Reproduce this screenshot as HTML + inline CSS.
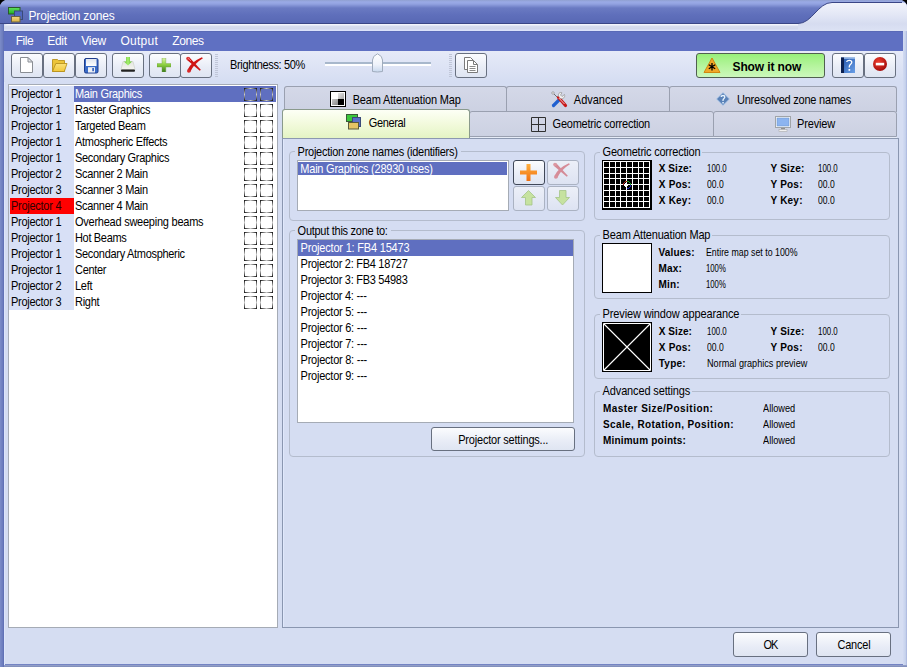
<!DOCTYPE html>
<html><head><meta charset="utf-8">
<style>
*{box-sizing:border-box;margin:0;padding:0}
html,body{width:907px;height:667px;overflow:hidden;background:#7484c4;font-family:"Liberation Sans",sans-serif}
#w{position:absolute;left:0;top:0;width:907px;height:667px;overflow:hidden}
.a{position:absolute}
.t{position:absolute;white-space:pre;line-height:1;font-family:"Liberation Sans",sans-serif}
.btn{position:absolute;border:1px solid #687080;border-radius:3px;background:linear-gradient(#fbfcfe,#e8ecf6 60%,#dfe5f2)}
.grp{position:absolute;border:1px solid #b4bccd;border-radius:4px}
.glab{position:absolute;background:#d5ddf2;height:12px}
.cb{position:absolute;width:13px;height:13px;background:linear-gradient(90deg,#111,#c8c8c8 50%,#111) 0 0/13px 1px no-repeat,linear-gradient(90deg,#111,#c8c8c8 50%,#111) 0 12px/13px 1px no-repeat,linear-gradient(#111,#c8c8c8 50%,#111) 0 0/1px 13px no-repeat,linear-gradient(#111,#c8c8c8 50%,#111) 12px 0/1px 13px no-repeat}
.tab{position:absolute;border:1px solid #9aa0b0;border-bottom:none;border-radius:3px 3px 0 0;background:linear-gradient(#d4d8e8,#ccd1e2)}
</style></head><body><div id="w">
<!-- title bar -->
<div class="a" style="left:0;top:0;width:907px;height:24px;background:linear-gradient(#90a0d0 0,#9aaae6 2px,#92a2e0 4px,#6a7ac2 8px,#5f6fbb 15px,#5868b4 23px)"></div>

<svg class="a" style="left:0;top:0" width="907" height="8">
 <path d="M0 0 H5 Q1.5 1.5 0 5 Z" fill="#000"/>
 <path d="M907 0 H902 Q905.5 1.5 907 5 Z" fill="#000"/>
</svg>
<!-- app icon -->
<svg class="a" style="left:8px;top:7px" width="16" height="16">
 <defs><linearGradient id="ig" x1="0" y1="0" x2="0" y2="1"><stop offset="0" stop-color="#60e060"/><stop offset="1" stop-color="#20b020"/></linearGradient>
 <linearGradient id="iy" x1="0" y1="0" x2="0" y2="1"><stop offset="0" stop-color="#f0d888"/><stop offset="1" stop-color="#d8b040"/></linearGradient></defs>
 <rect x="0.5" y="0.5" width="11.5" height="6.5" fill="url(#ig)" stroke="#2a5a2a"/>
 <rect x="6.5" y="4" width="8" height="8.5" fill="#5068c0" stroke="#3a4a7a"/>
 <rect x="3.5" y="9.5" width="8.5" height="5.5" fill="url(#iy)" stroke="#6a6040"/>
</svg>
<!-- close X -->
<svg class="a" style="left:882px;top:8px" width="16" height="16"><path d="M3 3 L12.5 12.5 M12.5 3 L3 12.5" stroke="#4a5068" stroke-width="1.8"/></svg>
<!-- inner dialog -->
<div class="a" style="left:4px;top:24px;width:899px;height:640px;background:#d5ddf2"></div>
<div class="a" style="left:903px;top:31px;width:4px;height:636px;background:linear-gradient(90deg,#d2daf2,#c6d2ec 60%,#a8b4dc)"></div>
<div class="a" style="left:4px;top:82px;width:1px;height:583px;background:#dde5fb"></div><div class="a" style="left:0;top:665px;width:907px;height:2px;background:linear-gradient(#98a4cc,#7c8ab8)"></div>
<div class="a" style="left:0;top:24px;width:4px;height:643px;background:linear-gradient(90deg,#7c8cc8,#6a7abc 75%,#5a6ab0)"></div>
<div class="a" style="left:4px;top:24px;width:899px;height:7px;background:linear-gradient(#f2f4fc 0,#f2f4fc 1px,#d6dcee 2px,#d2d8ec 5px,#dce2fa 6px);border-radius:4px 0 0 0"></div>
<svg class="a" style="left:0;top:0" width="907" height="31">
 <defs><linearGradient id="tl" x1="0" y1="0" x2="0" y2="1"><stop offset="0" stop-color="#f2f4fc"/><stop offset="0.4" stop-color="#e4e8f6"/><stop offset="0.75" stop-color="#d6dcf0"/><stop offset="1" stop-color="#dce2f4"/></linearGradient></defs>
 <path d="M798 23.5 C812 23.5 818 2.5 832 2.5 L903 2.5 Q907 2.5 907 7 L907 31 L798 31 Z" fill="url(#tl)"/>
 <path d="M0 23.5 L798 23.5 C812 23.5 818 2.5 832 2.5 L902 2.5" fill="none" stroke="#3a4686" stroke-width="1"/>
</svg>
<div class="a" style="left:4px;top:31px;width:899px;height:20px;background:linear-gradient(#5262ac 0,#5f70c2 1px)"></div>
<div class="a" style="left:4px;top:51px;width:899px;height:31px;background:linear-gradient(#e6eaf8,#d5ddf2)"></div>
<!-- toolbar buttons -->
<div class="btn" style="left:11px;top:53px;width:32px;height:25px"></div>
<div class="btn" style="left:43px;top:53px;width:32px;height:25px"></div>
<div class="btn" style="left:75px;top:53px;width:32px;height:25px"></div>
<div class="btn" style="left:112px;top:53px;width:32px;height:25px"></div>
<div class="btn" style="left:149px;top:53px;width:32px;height:25px"></div>
<div class="btn" style="left:180px;top:53px;width:32px;height:25px"></div>
<div class="btn" style="left:455px;top:53px;width:32px;height:25px"></div>
<div class="btn" style="left:696px;top:53px;width:129px;height:25px;background:linear-gradient(#98f07a,#b4f49c 50%,#ccf8bc);border-color:#506050"></div>
<div class="btn" style="left:832px;top:53px;width:32px;height:25px"></div>
<div class="btn" style="left:864px;top:53px;width:32px;height:25px"></div>
<!-- separators -->
<div class="a" style="left:215px;top:54px;width:3px;height:24px;background:repeating-linear-gradient(#c0c6d8 0 1px,transparent 1px 2px)"></div>
<div class="a" style="left:449px;top:54px;width:3px;height:24px;background:repeating-linear-gradient(#c0c6d8 0 1px,transparent 1px 2px)"></div>
<!-- slider -->
<div class="a" style="left:325px;top:62px;width:106px;height:4px;background:#a8b8cc;border-bottom:2px solid #fff"></div>
<svg class="a" style="left:371px;top:53px" width="13" height="20">
 <defs><linearGradient id="th" x1="0" y1="0" x2="0" y2="1"><stop offset="0" stop-color="#fff"/><stop offset="0.6" stop-color="#eef2fa"/><stop offset="1" stop-color="#c8d8ee"/></linearGradient></defs>
 <path d="M1.5 18.5 V7 Q1.5 3 6.5 0.8 Q11.5 3 11.5 7 V18.5 Q6.5 19.5 1.5 18.5 Z" fill="url(#th)" stroke="#a0acbc"/>
</svg>

<!-- left list -->
<div class="a" style="left:8px;top:84px;width:270px;height:544px;background:#fff;border:1px solid #a5abb5"></div>
<div class="a" style="left:9px;top:86px;width:65px;height:224px;background:#d8e0f6"></div>
<div class="a" style="left:74px;top:86px;width:202px;height:16px;background:#5f6fc0"></div>
<div class="a" style="left:10px;top:198px;width:64px;height:16px;background:#ff0000"></div>
<div class="cb" style="left:244px;top:88px"></div>
<div class="cb" style="left:260px;top:88px"></div>
<div class="cb" style="left:244px;top:104px"></div>
<div class="cb" style="left:260px;top:104px"></div>
<div class="cb" style="left:244px;top:120px"></div>
<div class="cb" style="left:260px;top:120px"></div>
<div class="cb" style="left:244px;top:136px"></div>
<div class="cb" style="left:260px;top:136px"></div>
<div class="cb" style="left:244px;top:152px"></div>
<div class="cb" style="left:260px;top:152px"></div>
<div class="cb" style="left:244px;top:168px"></div>
<div class="cb" style="left:260px;top:168px"></div>
<div class="cb" style="left:244px;top:184px"></div>
<div class="cb" style="left:260px;top:184px"></div>
<div class="cb" style="left:244px;top:200px"></div>
<div class="cb" style="left:260px;top:200px"></div>
<div class="cb" style="left:244px;top:216px"></div>
<div class="cb" style="left:260px;top:216px"></div>
<div class="cb" style="left:244px;top:232px"></div>
<div class="cb" style="left:260px;top:232px"></div>
<div class="cb" style="left:244px;top:248px"></div>
<div class="cb" style="left:260px;top:248px"></div>
<div class="cb" style="left:244px;top:264px"></div>
<div class="cb" style="left:260px;top:264px"></div>
<div class="cb" style="left:244px;top:280px"></div>
<div class="cb" style="left:260px;top:280px"></div>
<div class="cb" style="left:244px;top:296px"></div>
<div class="cb" style="left:260px;top:296px"></div>
<!-- tabs -->
<div class="tab" style="left:284px;top:86px;width:223px;height:26px"></div>
<div class="tab" style="left:506px;top:86px;width:164px;height:26px"></div>
<div class="tab" style="left:669px;top:86px;width:228px;height:26px"></div>
<div class="tab" style="left:469px;top:111px;width:245px;height:26px;border-bottom:1px solid #9aa0b0"></div>
<div class="tab" style="left:713px;top:111px;width:184px;height:26px;border-bottom:1px solid #9aa0b0"></div>
<div class="a" style="left:469px;top:137px;width:428px;height:1px;background:#e6ecf8"></div>
<!-- panel -->
<div class="a" style="left:282px;top:138px;width:617px;height:490px;border:1px solid #8a96b0;border-top-color:#8c98b0"></div>
<div class="a" style="left:283px;top:139px;width:1px;height:488px;background:#e0e8fc"></div>
<div class="a" style="left:282px;top:109px;width:188px;height:29px;background:linear-gradient(#fdfff6,#f2fadc 50%,#e4f4c4);border:1px solid #8a9a8c;border-bottom:none;border-radius:3px 3px 0 0"></div>
<!-- groups -->
<div class="grp" style="left:289px;top:151px;width:296px;height:70px"></div>
<div class="glab" style="left:295px;top:145px;width:166px"></div>
<div class="a" style="left:297px;top:160px;width:212px;height:51px;background:#fff;border:1px solid #a5abb5"></div>
<div class="a" style="left:298px;top:162px;width:209px;height:13px;background:#5f6fc0"></div>
<div class="btn" style="left:513px;top:160px;width:32px;height:25px;border-color:#404858"></div>
<div class="btn" style="left:547px;top:160px;width:32px;height:25px;border-color:#aab2c2;background:linear-gradient(#eceff8,#dde3f2)"></div>
<div class="btn" style="left:513px;top:186px;width:32px;height:25px;border-color:#aab2c2;background:linear-gradient(#eceff8,#dde3f2)"></div>
<div class="btn" style="left:547px;top:186px;width:32px;height:25px;border-color:#aab2c2;background:linear-gradient(#eceff8,#dde3f2)"></div>

<div class="grp" style="left:289px;top:230px;width:296px;height:227px"></div>
<div class="glab" style="left:295px;top:224px;width:96px"></div>
<div class="a" style="left:297px;top:239px;width:277px;height:184px;background:#fff;border:1px solid #a5abb5"></div>
<div class="a" style="left:298px;top:240px;width:275px;height:16px;background:#5f6fc0"></div>
<div class="btn" style="left:431px;top:427px;width:144px;height:24px"></div>

<div class="grp" style="left:594px;top:152px;width:296px;height:68px"></div>
<div class="glab" style="left:600px;top:146px;width:102px"></div>
<div class="grp" style="left:594px;top:235px;width:296px;height:64px"></div>
<div class="glab" style="left:600px;top:229px;width:112px"></div>
<div class="grp" style="left:594px;top:314px;width:296px;height:65px"></div>
<div class="glab" style="left:600px;top:308px;width:141px"></div>
<div class="grp" style="left:594px;top:391px;width:296px;height:66px"></div>
<div class="glab" style="left:600px;top:385px;width:92px"></div>

<!-- geometric grid -->
<svg class="a" style="left:602px;top:160px" width="50" height="50" shape-rendering="crispEdges">
 <rect x="0" y="0" width="50" height="50" fill="#000"/><rect x="1" y="1" width="1" height="47" fill="#fff"/><rect x="1" y="1" width="47" height="1" fill="#fff"/><rect x="7" y="1" width="1" height="47" fill="#fff"/><rect x="1" y="7" width="47" height="1" fill="#fff"/><rect x="13" y="1" width="1" height="47" fill="#fff"/><rect x="1" y="13" width="47" height="1" fill="#fff"/><rect x="18" y="1" width="1" height="47" fill="#fff"/><rect x="1" y="18" width="47" height="1" fill="#fff"/><rect x="24" y="1" width="1" height="47" fill="#fff"/><rect x="1" y="24" width="47" height="1" fill="#fff"/><rect x="30" y="1" width="1" height="47" fill="#fff"/><rect x="1" y="30" width="47" height="1" fill="#fff"/><rect x="36" y="1" width="1" height="47" fill="#fff"/><rect x="1" y="36" width="47" height="1" fill="#fff"/><rect x="41" y="1" width="1" height="47" fill="#fff"/><rect x="1" y="41" width="47" height="1" fill="#fff"/><rect x="47" y="1" width="1" height="47" fill="#fff"/><rect x="1" y="47" width="47" height="1" fill="#fff"/>
 <path d="M25 21.5 A3.5 3.5 0 0 1 28.5 25" stroke="#20a020" fill="none" stroke-width="1"/>
 <path d="M21.5 25 A3.5 3.5 0 0 1 25 21.5" stroke="#b02020" fill="none" stroke-width="1"/>
 <path d="M28.5 25 A3.5 3.5 0 0 1 25 28.5" stroke="#2020c0" fill="none" stroke-width="1"/>
 <path d="M22 25 H26 M24 23 L22 25 L24 27" stroke="#fff" fill="none" stroke-width="1.2"/>
</svg>
<div class="a" style="left:602px;top:243px;width:50px;height:50px;background:#fff;border:1px solid #000"></div>
<svg class="a" style="left:602px;top:322px" width="50" height="50">
 <rect x="0" y="0" width="50" height="50" fill="#000"/>
 <path d="M1.5 1.5 H48.5 V48.5 H1.5 Z" stroke="#fff" stroke-width="1" fill="none"/><path d="M2 2 L48 48 M48 2 L2 48" stroke="#fff" stroke-width="1.1" fill="none"/>
</svg>

<!-- OK / Cancel -->
<div class="btn" style="left:733px;top:632px;width:75px;height:25px"></div>
<div class="btn" style="left:816px;top:632px;width:75px;height:25px"></div>
<!-- toolbar icons -->
<svg class="a" style="left:19px;top:56px" width="16" height="18">
 <path d="M1.5 1.5 H9 L13.5 6 V16.5 H1.5 Z" fill="#fff" stroke="#8a8e94"/>
 <path d="M9 1.5 V6 H13.5 Z" fill="#e4e6ea" stroke="#8a8e94" stroke-linejoin="round"/>
</svg>
<svg class="a" style="left:51px;top:58px" width="18" height="15">
 <defs><linearGradient id="fo" x1="0" y1="0" x2="0" y2="1"><stop offset="0" stop-color="#fbe27a"/><stop offset="1" stop-color="#f2c83a"/></linearGradient></defs>
 <path d="M1.5 13.5 V1.5 H6.5 L7.5 2.5 H13.5 V13.5 Z" fill="#ecc43a" stroke="#b8921e" stroke-width="0.9"/>
 <path d="M1.5 13.5 L4.8 5.5 H16 L13.3 13.5 Z" fill="url(#fo)" stroke="#b8921e" stroke-width="0.9" stroke-linejoin="round"/>
</svg>
<svg class="a" style="left:84px;top:58px" width="15" height="16">
 <defs><linearGradient id="fl" x1="0" y1="0" x2="0" y2="1"><stop offset="0" stop-color="#dfe4ee"/><stop offset="1" stop-color="#ffffff"/></linearGradient></defs>
 <rect x="0.5" y="0.5" width="13.5" height="14.5" rx="1.5" fill="#3a6cc8" stroke="#1e3c8c"/>
 <rect x="2" y="1" width="10.5" height="7" fill="url(#fl)"/>
 <rect x="4" y="9.2" width="7" height="5.3" fill="#eef0f4"/>
 <rect x="8.3" y="10" width="1.6" height="3.2" fill="#2a58b8"/>
</svg>
<svg class="a" style="left:120px;top:56px" width="17" height="17">
 <defs><linearGradient id="tr" x1="0" y1="0" x2="0" y2="1"><stop offset="0" stop-color="#e4e6e0"/><stop offset="1" stop-color="#f4f4f0"/></linearGradient>
 <linearGradient id="ar" x1="0" y1="0" x2="1" y2="0"><stop offset="0" stop-color="#60c030"/><stop offset="0.5" stop-color="#a8f070"/><stop offset="1" stop-color="#58b828"/></linearGradient></defs>
 <path d="M3 5.5 H13 L15 13.5 H1 Z" fill="url(#tr)" stroke="#c8ccc4" stroke-width="0.6"/>
 <rect x="1" y="13.5" width="14" height="2.2" rx="1" fill="#222"/>
 <path d="M6 1 H10 V5.5 H12 L8 9.5 L4 5.5 H6 Z" fill="url(#ar)"/>
</svg>
<svg class="a" style="left:157px;top:58px" width="14" height="14">
 <defs><linearGradient id="pg" x1="0" y1="0" x2="0" y2="1"><stop offset="0" stop-color="#dcf6a8"/><stop offset="0.45" stop-color="#92d444"/><stop offset="1" stop-color="#3a7a1a"/></linearGradient></defs>
 <path d="M5 0 H8.8 V5.6 H14 V9 H8.8 V14 H5 V9 H0 V5.6 H5 Z" fill="url(#pg)" stroke="#6a9a40" stroke-width="0.4"/>
</svg>
<svg class="a" style="left:185px;top:55px" width="20" height="20">
 <path d="M4.24 2.26 L15.83 14.77 L14.77 15.83 L1.76 4.74 Z" fill="#cc1414"/>
 <circle cx="3" cy="3.5" r="1.8" fill="#e03838"/>
 <path d="M16.87 2.17 Q6 7 2.53 14.73 L5.07 17.27 Q8.5 9 17.93 3.23 Z" fill="#d01616"/>
 <circle cx="3.8" cy="16" r="1.8" fill="#d82a2a"/>
 <path d="M3 3 L6 6" stroke="#f07070" stroke-width="1"/>
</svg>
<svg class="a" style="left:463px;top:56px" width="17" height="18">
 <path d="M1.5 1.5 H7.5 L10 4 V13.5 H1.5 Z" fill="#fff" stroke="#7a7a7a"/>
 <path d="M4.5 4.5 H10.5 L14.5 8.5 V16.5 H4.5 Z" fill="#fff" stroke="#7a7a7a"/>
 <path d="M10.5 4.5 V8.5 H14.5" fill="none" stroke="#7a7a7a"/>
 <path d="M6.5 10.5 H12.5 M6.5 12.5 H12.5 M6.5 14.5 H12.5" stroke="#8a8a8a"/>
</svg>
<svg class="a" style="left:703px;top:57px" width="18" height="17">
 <path d="M9 1 L17 15.5 H1 Z" fill="#f0a828" stroke="#d08810" stroke-linejoin="round"/>
 <path d="M9 6 V13.5 M5.8 7.8 L12.2 11.7 M12.2 7.8 L5.8 11.7" stroke="#000" stroke-width="1.3"/>
</svg>
<svg class="a" style="left:841px;top:57px" width="14" height="16">
 <defs><linearGradient id="bk" x1="0" y1="0" x2="1" y2="1"><stop offset="0" stop-color="#2050a8"/><stop offset="1" stop-color="#6aa0e8"/></linearGradient></defs>
 <rect x="0" y="0.5" width="14" height="15.5" fill="url(#bk)"/>
 <rect x="0" y="0.5" width="3" height="15.5" fill="#0c2050"/>
 <rect x="3" y="0.5" width="11" height="1.2" fill="#a8c8f0"/>
 <path d="M5.8 5 C5.8 2.8 10.8 2.8 10.8 5.2 C10.8 7.2 8.3 7.2 8.3 9.5 V10.5" fill="none" stroke="#fff" stroke-width="1.3"/>
 <rect x="7.5" y="12" width="1.7" height="1.8" fill="#fff"/>
</svg>
<svg class="a" style="left:872px;top:56px" width="16" height="16">
 <defs><radialGradient id="st" cx="0.4" cy="0.35" r="0.7"><stop offset="0" stop-color="#f04030"/><stop offset="1" stop-color="#a00808"/></radialGradient></defs>
 <circle cx="8" cy="8" r="7" fill="url(#st)"/>
 <rect x="3.8" y="6.8" width="8.4" height="2.6" fill="#fff"/>
</svg>

<!-- tab icons -->
<svg class="a" style="left:330px;top:91px" width="16" height="16" shape-rendering="crispEdges">
 <defs>
  <linearGradient id="g1" x1="0" y1="0" x2="1" y2="1"><stop offset="0" stop-color="#e8e8e8"/><stop offset="1" stop-color="#a8a8a8"/></linearGradient>
  <linearGradient id="g2" x1="0" y1="0" x2="1" y2="1"><stop offset="0" stop-color="#c8c8c8"/><stop offset="1" stop-color="#888888"/></linearGradient>
 </defs>
 <rect x="0" y="0" width="16" height="16" fill="#000"/>
 <rect x="1" y="1" width="14" height="14" fill="#fff"/>
 <rect x="2" y="2" width="6" height="6" fill="#fff"/>
 <rect x="8" y="2" width="6" height="6" fill="url(#g1)"/>
 <rect x="2" y="8" width="6" height="6" fill="url(#g2)"/>
 <rect x="8" y="8" width="6" height="6" fill="#000"/>
</svg>
<svg class="a" style="left:551px;top:91px" width="18" height="17">
 <path d="M2 2 L9 9" stroke="#707070" stroke-width="1"/>
 <circle cx="2" cy="2" r="1.2" fill="#fff" stroke="#707070" stroke-width="0.6"/>
 <path d="M2.5 14.5 L8.5 8.5" stroke="#2060d0" stroke-width="3.2" stroke-linecap="round"/>
 <path d="M14.5 14.5 L7.5 6.5" stroke="#c81818" stroke-width="3.2" stroke-linecap="round"/>
 <path d="M7.8 7 L13.5 13" stroke="#fff" stroke-width="0.7"/>
 <path d="M8 6 C6 3 9 0.5 11 1.8 L9.5 4 L11 5.5 L13.5 3.5 C14.5 6 12 8.5 9.5 7.5" fill="#f0f0f0" stroke="#909090" stroke-width="0.7"/>
</svg>
<svg class="a" style="left:716px;top:92px" width="14" height="14">
 <path d="M7 0.5 L13.5 7 L7 13.5 L0.5 7 Z" fill="#5a82b8" stroke="#b8d0f0" stroke-width="0.8"/>
 <path d="M5.2 5 C5.2 3 8.8 3 8.8 5 C8.8 6.5 7 6.5 7 8.3 V9" fill="none" stroke="#e8f4ff" stroke-width="1.3"/>
 <rect x="6.3" y="10" width="1.5" height="1.5" fill="#e8f4ff"/>
</svg>
<svg class="a" style="left:346px;top:114px" width="16" height="16">
 <rect x="0.5" y="0.5" width="11" height="7" fill="#3cc83c" stroke="#3a5a3a"/>
 <rect x="6.5" y="3.5" width="8" height="9" fill="#5870c8" stroke="#3a4a7a"/>
 <rect x="2.5" y="8.5" width="10" height="6.5" fill="#e4c464" stroke="#5a5a3a"/>
</svg>
<svg class="a" style="left:531px;top:117px" width="15" height="15">
 <path d="M0.5 0.5 H14.5 V14.5 H0.5 Z M7.5 0.5 V14.5 M0.5 7.5 H14.5" fill="none" stroke="#303030"/>
</svg>
<svg class="a" style="left:775px;top:116px" width="16" height="16">
 <rect x="0.5" y="0.5" width="15" height="11" fill="#f4f8fc" stroke="#a0a4a8"/>
 <rect x="2" y="2" width="12" height="8" fill="#8cb4f0" stroke="#6a90c8" stroke-width="0.5"/>
 <rect x="6" y="12" width="4" height="1.5" fill="#909090"/>
 <rect x="4" y="13.5" width="8" height="2" fill="#f0f0f0" stroke="#a0a0a0" stroke-width="0.5"/>
</svg>
<!-- zone buttons icons -->
<svg class="a" style="left:520px;top:164px" width="18" height="17">
 <defs><linearGradient id="or" x1="0" y1="0" x2="0" y2="1"><stop offset="0" stop-color="#ffb040"/><stop offset="1" stop-color="#f07010"/></linearGradient></defs>
 <path d="M6.5 0 H10.5 V6.5 H17 V10.5 H10.5 V17 H6.5 V10.5 H0 V6.5 H6.5 Z" fill="url(#or)"/>
</svg>
<svg class="a" style="left:552px;top:161px" width="20" height="20">
 <path d="M4.24 2.26 L15.83 14.77 L14.77 15.83 L1.76 4.74 Z" fill="#d48a96"/>
 <circle cx="3" cy="3.5" r="1.8" fill="#dc98a2"/>
 <path d="M16.87 2.17 Q6 7 2.53 14.73 L5.07 17.27 Q8.5 9 17.93 3.23 Z" fill="#d68c98"/>
 <circle cx="3.8" cy="16" r="1.8" fill="#d8909c"/>
</svg>
<svg class="a" style="left:521px;top:190px" width="16" height="16">
 <path d="M7.5 0.5 L14.5 7.5 H11 V15 H4.5 V7.5 H0.5 Z" fill="#c6e2a0" stroke="#a4c488" stroke-width="0.8" stroke-linejoin="round"/>
</svg>
<svg class="a" style="left:555px;top:190px" width="16" height="16">
 <path d="M7.5 15 L14.5 7.5 H11 V0.5 H4.5 V7.5 H0.5 Z" fill="#c6e2a0" stroke="#a4c488" stroke-width="0.8" stroke-linejoin="round"/>
</svg>
<span class=t style='left:28.5px;top:9.84px;font-size:12px;font-weight:400;color:#fff;letter-spacing:-0.170px;'>Projection zones</span>
<span class=t style='left:15.8px;top:34.84px;font-size:12px;font-weight:400;color:#fff;letter-spacing:-0.511px;'>File</span>
<span class=t style='left:47.3px;top:34.84px;font-size:12px;font-weight:400;color:#fff;letter-spacing:-0.322px;'>Edit</span>
<span class=t style='left:81.3px;top:34.84px;font-size:12px;font-weight:400;color:#fff;letter-spacing:-0.274px;'>View</span>
<span class=t style='left:120.5px;top:34.84px;font-size:12px;font-weight:400;color:#fff;letter-spacing:0.245px;'>Output</span>
<span class=t style='left:172.2px;top:34.84px;font-size:12px;font-weight:400;color:#fff;letter-spacing:-0.372px;'>Zones</span>
<span class=t style='left:230.0px;top:59.69px;font-size:11px;font-weight:400;color:#000;letter-spacing:-0.341px;transform:scaleY(1.08);transform-origin:0 9.31px;'>Brightness: 50%</span>
<span class=t style='left:732.5px;top:60.84px;font-size:12px;font-weight:700;color:#000;letter-spacing:-0.109px;'>Show it now</span>
<span class=t style='left:10.9px;top:88.69px;font-size:11px;font-weight:400;color:#000;letter-spacing:-0.255px;transform:scaleY(1.08);transform-origin:0 9.31px;'>Projector 1</span>
<span class=t style='left:75.0px;top:88.69px;font-size:11px;font-weight:400;color:#fff;letter-spacing:-0.302px;transform:scaleY(1.08);transform-origin:0 9.31px;'>Main Graphics</span>
<span class=t style='left:10.9px;top:104.69px;font-size:11px;font-weight:400;color:#000;letter-spacing:-0.255px;transform:scaleY(1.08);transform-origin:0 9.31px;'>Projector 1</span>
<span class=t style='left:75.0px;top:104.69px;font-size:11px;font-weight:400;color:#000;letter-spacing:-0.291px;transform:scaleY(1.08);transform-origin:0 9.31px;'>Raster Graphics</span>
<span class=t style='left:10.9px;top:120.69px;font-size:11px;font-weight:400;color:#000;letter-spacing:-0.255px;transform:scaleY(1.08);transform-origin:0 9.31px;'>Projector 1</span>
<span class=t style='left:75.0px;top:120.69px;font-size:11px;font-weight:400;color:#000;letter-spacing:-0.316px;transform:scaleY(1.08);transform-origin:0 9.31px;'>Targeted Beam</span>
<span class=t style='left:10.9px;top:136.69px;font-size:11px;font-weight:400;color:#000;letter-spacing:-0.255px;transform:scaleY(1.08);transform-origin:0 9.31px;'>Projector 1</span>
<span class=t style='left:75.0px;top:136.69px;font-size:11px;font-weight:400;color:#000;letter-spacing:-0.283px;transform:scaleY(1.08);transform-origin:0 9.31px;'>Atmospheric Effects</span>
<span class=t style='left:10.9px;top:152.69px;font-size:11px;font-weight:400;color:#000;letter-spacing:-0.255px;transform:scaleY(1.08);transform-origin:0 9.31px;'>Projector 1</span>
<span class=t style='left:75.0px;top:152.69px;font-size:11px;font-weight:400;color:#000;letter-spacing:-0.305px;transform:scaleY(1.08);transform-origin:0 9.31px;'>Secondary Graphics</span>
<span class=t style='left:10.9px;top:168.69px;font-size:11px;font-weight:400;color:#000;letter-spacing:-0.255px;transform:scaleY(1.08);transform-origin:0 9.31px;'>Projector 2</span>
<span class=t style='left:75.0px;top:168.69px;font-size:11px;font-weight:400;color:#000;letter-spacing:-0.303px;transform:scaleY(1.08);transform-origin:0 9.31px;'>Scanner 2 Main</span>
<span class=t style='left:10.9px;top:184.69px;font-size:11px;font-weight:400;color:#000;letter-spacing:-0.255px;transform:scaleY(1.08);transform-origin:0 9.31px;'>Projector 3</span>
<span class=t style='left:75.0px;top:184.69px;font-size:11px;font-weight:400;color:#000;letter-spacing:-0.303px;transform:scaleY(1.08);transform-origin:0 9.31px;'>Scanner 3 Main</span>
<span class=t style='left:10.9px;top:200.69px;font-size:11px;font-weight:400;color:#300000;letter-spacing:-0.255px;transform:scaleY(1.08);transform-origin:0 9.31px;'>Projector 4</span>
<span class=t style='left:75.0px;top:200.69px;font-size:11px;font-weight:400;color:#000;letter-spacing:-0.303px;transform:scaleY(1.08);transform-origin:0 9.31px;'>Scanner 4 Main</span>
<span class=t style='left:10.9px;top:216.69px;font-size:11px;font-weight:400;color:#000;letter-spacing:-0.255px;transform:scaleY(1.08);transform-origin:0 9.31px;'>Projector 1</span>
<span class=t style='left:75.0px;top:216.69px;font-size:11px;font-weight:400;color:#000;letter-spacing:-0.244px;transform:scaleY(1.08);transform-origin:0 9.31px;'>Overhead sweeping beams</span>
<span class=t style='left:10.9px;top:232.69px;font-size:11px;font-weight:400;color:#000;letter-spacing:-0.255px;transform:scaleY(1.08);transform-origin:0 9.31px;'>Projector 1</span>
<span class=t style='left:75.0px;top:232.69px;font-size:11px;font-weight:400;color:#000;letter-spacing:-0.333px;transform:scaleY(1.08);transform-origin:0 9.31px;'>Hot Beams</span>
<span class=t style='left:10.9px;top:248.69px;font-size:11px;font-weight:400;color:#000;letter-spacing:-0.255px;transform:scaleY(1.08);transform-origin:0 9.31px;'>Projector 1</span>
<span class=t style='left:75.0px;top:248.69px;font-size:11px;font-weight:400;color:#000;letter-spacing:-0.304px;transform:scaleY(1.08);transform-origin:0 9.31px;'>Secondary Atmospheric</span>
<span class=t style='left:10.9px;top:264.69px;font-size:11px;font-weight:400;color:#000;letter-spacing:-0.255px;transform:scaleY(1.08);transform-origin:0 9.31px;'>Projector 1</span>
<span class=t style='left:75.0px;top:264.69px;font-size:11px;font-weight:400;color:#000;letter-spacing:-0.303px;transform:scaleY(1.08);transform-origin:0 9.31px;'>Center</span>
<span class=t style='left:10.9px;top:280.69px;font-size:11px;font-weight:400;color:#000;letter-spacing:-0.255px;transform:scaleY(1.08);transform-origin:0 9.31px;'>Projector 2</span>
<span class=t style='left:75.0px;top:280.69px;font-size:11px;font-weight:400;color:#000;letter-spacing:-0.252px;transform:scaleY(1.08);transform-origin:0 9.31px;'>Left</span>
<span class=t style='left:10.9px;top:296.69px;font-size:11px;font-weight:400;color:#000;letter-spacing:-0.255px;transform:scaleY(1.08);transform-origin:0 9.31px;'>Projector 3</span>
<span class=t style='left:75.0px;top:296.69px;font-size:11px;font-weight:400;color:#000;letter-spacing:-0.283px;transform:scaleY(1.08);transform-origin:0 9.31px;'>Right</span>
<span class=t style='left:352.7px;top:94.69px;font-size:11px;font-weight:400;color:#000;letter-spacing:-0.165px;transform:scaleY(1.08);transform-origin:0 9.31px;'>Beam Attenuation Map</span>
<span class=t style='left:573.8px;top:94.69px;font-size:11px;font-weight:400;color:#000;letter-spacing:-0.005px;transform:scaleY(1.08);transform-origin:0 9.31px;'>Advanced</span>
<span class=t style='left:737.0px;top:94.69px;font-size:11px;font-weight:400;color:#000;letter-spacing:-0.220px;transform:scaleY(1.08);transform-origin:0 9.31px;'>Unresolved zone names</span>
<span class=t style='left:368.7px;top:117.69px;font-size:11px;font-weight:400;color:#000;letter-spacing:-0.334px;transform:scaleY(1.08);transform-origin:0 9.31px;'>General</span>
<span class=t style='left:552.6px;top:118.69px;font-size:11px;font-weight:400;color:#000;letter-spacing:-0.235px;transform:scaleY(1.08);transform-origin:0 9.31px;'>Geometric correction</span>
<span class=t style='left:797.0px;top:118.69px;font-size:11px;font-weight:400;color:#000;letter-spacing:-0.161px;transform:scaleY(1.08);transform-origin:0 9.31px;'>Preview</span>
<span class=t style='left:297.6px;top:146.69px;font-size:11px;font-weight:400;color:#000;letter-spacing:-0.267px;transform:scaleY(1.08);transform-origin:0 9.31px;'>Projection zone names (identifiers)</span>
<span class=t style='left:297.6px;top:225.69px;font-size:11px;font-weight:400;color:#000;letter-spacing:-0.270px;transform:scaleY(1.08);transform-origin:0 9.31px;'>Output this zone to:</span>
<span class=t style='left:602.6px;top:146.69px;font-size:11px;font-weight:400;color:#000;letter-spacing:-0.220px;transform:scaleY(1.08);transform-origin:0 9.31px;'>Geometric correction</span>
<span class=t style='left:602.6px;top:229.69px;font-size:11px;font-weight:400;color:#000;letter-spacing:-0.180px;transform:scaleY(1.08);transform-origin:0 9.31px;'>Beam Attenuation Map</span>
<span class=t style='left:602.6px;top:308.69px;font-size:11px;font-weight:400;color:#000;letter-spacing:-0.133px;transform:scaleY(1.08);transform-origin:0 9.31px;'>Preview window appearance</span>
<span class=t style='left:602.6px;top:385.69px;font-size:11px;font-weight:400;color:#000;letter-spacing:-0.141px;transform:scaleY(1.08);transform-origin:0 9.31px;'>Advanced settings</span>
<span class=t style='left:300.3px;top:163.69px;font-size:11px;font-weight:400;color:#fff;letter-spacing:-0.226px;transform:scaleY(1.08);transform-origin:0 9.31px;'>Main Graphics (28930 uses)</span>
<span class=t style='left:300.6px;top:242.69px;font-size:11px;font-weight:400;color:#fff;letter-spacing:-0.201px;transform:scaleY(1.08);transform-origin:0 9.31px;'>Projector 1: FB4 15473</span>
<span class=t style='left:300.6px;top:258.69px;font-size:11px;font-weight:400;color:#000;letter-spacing:-0.283px;transform:scaleY(1.08);transform-origin:0 9.31px;'>Projector 2: FB4 18727</span>
<span class=t style='left:300.6px;top:274.69px;font-size:11px;font-weight:400;color:#000;letter-spacing:-0.283px;transform:scaleY(1.08);transform-origin:0 9.31px;'>Projector 3: FB3 54983</span>
<span class=t style='left:300.6px;top:290.69px;font-size:11px;font-weight:400;color:#000;letter-spacing:-0.269px;transform:scaleY(1.08);transform-origin:0 9.31px;'>Projector 4: ---</span>
<span class=t style='left:300.6px;top:306.69px;font-size:11px;font-weight:400;color:#000;letter-spacing:-0.242px;transform:scaleY(1.08);transform-origin:0 9.31px;'>Projector 5: ---</span>
<span class=t style='left:300.6px;top:322.69px;font-size:11px;font-weight:400;color:#000;letter-spacing:-0.242px;transform:scaleY(1.08);transform-origin:0 9.31px;'>Projector 6: ---</span>
<span class=t style='left:300.6px;top:338.69px;font-size:11px;font-weight:400;color:#000;letter-spacing:-0.242px;transform:scaleY(1.08);transform-origin:0 9.31px;'>Projector 7: ---</span>
<span class=t style='left:300.6px;top:354.69px;font-size:11px;font-weight:400;color:#000;letter-spacing:-0.242px;transform:scaleY(1.08);transform-origin:0 9.31px;'>Projector 8: ---</span>
<span class=t style='left:300.6px;top:370.69px;font-size:11px;font-weight:400;color:#000;letter-spacing:-0.242px;transform:scaleY(1.08);transform-origin:0 9.31px;'>Projector 9: ---</span>
<span class=t style='left:658.8px;top:163.53px;font-size:10px;font-weight:700;color:#000;letter-spacing:0.058px;'>X Size:</span>
<span class=t style='left:658.8px;top:179.53px;font-size:10px;font-weight:700;color:#000;letter-spacing:0.208px;'>X Pos:</span>
<span class=t style='left:658.8px;top:195.53px;font-size:10px;font-weight:700;color:#000;letter-spacing:0.208px;'>X Key:</span>
<span class=t style='left:706.8px;top:163.53px;font-size:10px;font-weight:400;color:#000;letter-spacing:0.000px;transform:scaleX(0.7870);transform-origin:0 0;'>100.0</span>
<span class=t style='left:706.8px;top:179.53px;font-size:10px;font-weight:400;color:#000;letter-spacing:0.000px;transform:scaleX(0.8578);transform-origin:0 0;'>00.0</span>
<span class=t style='left:706.8px;top:195.53px;font-size:10px;font-weight:400;color:#000;letter-spacing:0.000px;transform:scaleX(0.8578);transform-origin:0 0;'>00.0</span>
<span class=t style='left:770.5px;top:163.53px;font-size:10px;font-weight:700;color:#000;letter-spacing:0.186px;'>Y Size:</span>
<span class=t style='left:770.5px;top:179.53px;font-size:10px;font-weight:700;color:#000;letter-spacing:0.206px;'>Y Pos:</span>
<span class=t style='left:770.5px;top:195.53px;font-size:10px;font-weight:700;color:#000;letter-spacing:0.206px;'>Y Key:</span>
<span class=t style='left:818.3px;top:163.53px;font-size:10px;font-weight:400;color:#000;letter-spacing:0.000px;transform:scaleX(0.7870);transform-origin:0 0;'>100.0</span>
<span class=t style='left:818.3px;top:179.53px;font-size:10px;font-weight:400;color:#000;letter-spacing:0.000px;transform:scaleX(0.8578);transform-origin:0 0;'>00.0</span>
<span class=t style='left:818.3px;top:195.53px;font-size:10px;font-weight:400;color:#000;letter-spacing:0.000px;transform:scaleX(0.8578);transform-origin:0 0;'>00.0</span>
<span class=t style='left:658.4px;top:247.53px;font-size:10px;font-weight:700;color:#000;letter-spacing:0.200px;'>Values:</span>
<span class=t style='left:658.4px;top:263.54px;font-size:10px;font-weight:700;color:#000;letter-spacing:0.228px;'>Max:</span>
<span class=t style='left:658.4px;top:279.54px;font-size:10px;font-weight:700;color:#000;letter-spacing:0.205px;'>Min:</span>
<span class=t style='left:706.2px;top:247.53px;font-size:10px;font-weight:400;color:#000;letter-spacing:0.000px;transform:scaleX(0.8802);transform-origin:0 0;'>Entire map set to 100%</span>
<span class=t style='left:706.2px;top:263.54px;font-size:10px;font-weight:400;color:#000;letter-spacing:0.000px;transform:scaleX(0.7741);transform-origin:0 0;'>100%</span>
<span class=t style='left:706.2px;top:279.54px;font-size:10px;font-weight:400;color:#000;letter-spacing:0.000px;transform:scaleX(0.7741);transform-origin:0 0;'>100%</span>
<span class=t style='left:658.8px;top:326.54px;font-size:10px;font-weight:700;color:#000;letter-spacing:0.058px;'>X Size:</span>
<span class=t style='left:658.8px;top:342.54px;font-size:10px;font-weight:700;color:#000;letter-spacing:0.208px;'>X Pos:</span>
<span class=t style='left:658.8px;top:358.54px;font-size:10px;font-weight:700;color:#000;letter-spacing:0.208px;'>Type:</span>
<span class=t style='left:706.8px;top:326.54px;font-size:10px;font-weight:400;color:#000;letter-spacing:0.000px;transform:scaleX(0.7870);transform-origin:0 0;'>100.0</span>
<span class=t style='left:706.8px;top:342.54px;font-size:10px;font-weight:400;color:#000;letter-spacing:0.000px;transform:scaleX(0.8578);transform-origin:0 0;'>00.0</span>
<span class=t style='left:706.8px;top:358.54px;font-size:10px;font-weight:400;color:#000;letter-spacing:0.000px;transform:scaleX(0.9114);transform-origin:0 0;'>Normal graphics preview</span>
<span class=t style='left:770.5px;top:326.54px;font-size:10px;font-weight:700;color:#000;letter-spacing:0.186px;'>Y Size:</span>
<span class=t style='left:770.5px;top:342.54px;font-size:10px;font-weight:700;color:#000;letter-spacing:0.206px;'>Y Pos:</span>
<span class=t style='left:818.3px;top:326.54px;font-size:10px;font-weight:400;color:#000;letter-spacing:0.000px;transform:scaleX(0.7870);transform-origin:0 0;'>100.0</span>
<span class=t style='left:818.3px;top:342.54px;font-size:10px;font-weight:400;color:#000;letter-spacing:0.000px;transform:scaleX(0.8578);transform-origin:0 0;'>00.0</span>
<span class=t style='left:602.9px;top:403.54px;font-size:10px;font-weight:700;color:#000;letter-spacing:0.472px;'>Master Size/Position:</span>
<span class=t style='left:602.9px;top:419.54px;font-size:10px;font-weight:700;color:#000;letter-spacing:0.401px;'>Scale, Rotation, Position:</span>
<span class=t style='left:602.9px;top:435.54px;font-size:10px;font-weight:700;color:#000;letter-spacing:0.213px;'>Minimum points:</span>
<span class=t style='left:762.8px;top:403.54px;font-size:10px;font-weight:400;color:#000;letter-spacing:0.000px;transform:scaleX(0.9192);transform-origin:0 0;'>Allowed</span>
<span class=t style='left:762.8px;top:419.54px;font-size:10px;font-weight:400;color:#000;letter-spacing:0.000px;transform:scaleX(0.9192);transform-origin:0 0;'>Allowed</span>
<span class=t style='left:762.8px;top:435.54px;font-size:10px;font-weight:400;color:#000;letter-spacing:0.000px;transform:scaleX(0.9192);transform-origin:0 0;'>Allowed</span>
<span class=t style='left:458.2px;top:434.69px;font-size:11px;font-weight:400;color:#000;letter-spacing:-0.198px;transform:scaleY(1.08);transform-origin:0 9.31px;'>Projector settings...</span>
<span class=t style='left:763.4px;top:639.69px;font-size:11px;font-weight:400;color:#000;letter-spacing:-0.853px;transform:scaleY(1.08);transform-origin:0 9.31px;'>OK</span>
<span class=t style='left:837.4px;top:639.69px;font-size:11px;font-weight:400;color:#000;letter-spacing:-0.192px;transform:scaleY(1.08);transform-origin:0 9.31px;'>Cancel</span>
</div></body></html>
